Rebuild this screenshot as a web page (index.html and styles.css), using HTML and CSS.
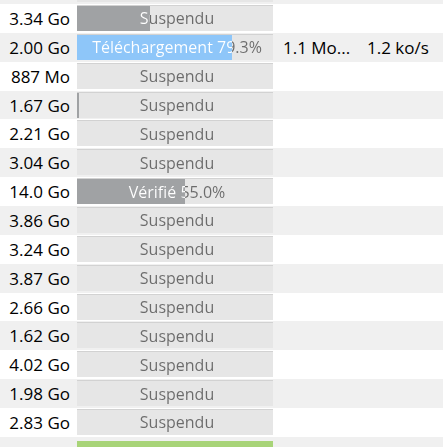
FILE: index.html
```html
<!DOCTYPE html>
<html lang="fr">

<head>
  <meta charset="UTF-8">
  <meta name="viewport" content="width=device-width, initial-scale=1.0">
  <title>Téléchargements</title>
  <link rel="stylesheet" href="styles.css">
</head>

<body>
  <div id="torrent-list">
    <div class="row">
      <div class="cell-size"></div>
      <div class="progress"></div>
    </div>
    <div class="row">
      <div class="cell-size">3.34 Go</div>
      <div class="progress paused" style="--done: 37%"><span class="label">Suspendu</span></div>
    </div>
    <div class="row">
      <div class="cell-size">2.00 Go</div>
      <div class="progress downloading" style="--done: 79.3%"><span class="label">Téléchargement 79.3%</span></div>
      <div class="cell-rate">1.1 Mo...</div>
      <div class="cell-rate">1.2 ko/s</div>
    </div>
    <div class="row">
      <div class="cell-size">887 Mo</div>
      <div class="progress"><span class="label">Suspendu</span></div>
    </div>
    <div class="row">
      <div class="cell-size">1.67 Go</div>
      <div class="progress paused" style="--done: 1.2%"><span class="label">Suspendu</span></div>
    </div>
    <div class="row">
      <div class="cell-size">2.21 Go</div>
      <div class="progress"><span class="label">Suspendu</span></div>
    </div>
    <div class="row">
      <div class="cell-size">3.04 Go</div>
      <div class="progress"><span class="label">Suspendu</span></div>
    </div>
    <div class="row">
      <div class="cell-size">14.0 Go</div>
      <div class="progress paused" style="--done: 55%"><span class="label">Vérifié 55.0%</span></div>
    </div>
    <div class="row">
      <div class="cell-size">3.86 Go</div>
      <div class="progress"><span class="label">Suspendu</span></div>
    </div>
    <div class="row">
      <div class="cell-size">3.24 Go</div>
      <div class="progress"><span class="label">Suspendu</span></div>
    </div>
    <div class="row">
      <div class="cell-size">3.87 Go</div>
      <div class="progress"><span class="label">Suspendu</span></div>
    </div>
    <div class="row">
      <div class="cell-size">2.66 Go</div>
      <div class="progress"><span class="label">Suspendu</span></div>
    </div>
    <div class="row">
      <div class="cell-size">1.62 Go</div>
      <div class="progress"><span class="label">Suspendu</span></div>
    </div>
    <div class="row">
      <div class="cell-size">4.02 Go</div>
      <div class="progress"><span class="label">Suspendu</span></div>
    </div>
    <div class="row">
      <div class="cell-size">1.98 Go</div>
      <div class="progress"><span class="label">Suspendu</span></div>
    </div>
    <div class="row">
      <div class="cell-size">2.83 Go</div>
      <div class="progress"><span class="label">Suspendu</span></div>
    </div>
    <div class="row">
      <div class="cell-size"></div>
      <div class="progress seeding" style="--done: 100%"></div>
    </div>
  </div>
</body>

</html>
```

FILE: styles.css
```css
body {
  margin: 0;
  background-color: white;
  font-family: "Open Sans", "Noto Sans", sans-serif;
  font-size: 17px;
  color: #000;
  overflow: hidden;
}

/* first row is scrolled almost out of view */
#torrent-list {
  margin-top: -24.86px;
}

.row {
  display: flex;
  align-items: center;
  height: 28.86px;
  white-space: nowrap;
}

.row:nth-child(odd) {
  background-color: #f0f0f0;
}

.cell-size {
  width: 70px;
  padding-right: 7px;
  text-align: right;
}

.cell-rate {
  padding-left: 10px;
  width: 74px;
}

/* --done is the finished part, the label turns white over it */
.progress {
  --done: 0%;
  --bar: #a0a2a4;
  position: relative;
  width: 196px;
  height: 25px;
  margin-top: -1px;
  background-color: #e6e6e6;
  border-top: 1px solid #d2d2d2;
  display: flex;
  align-items: center;
  font-size: 16px;

  &::before {
    content: "";
    position: absolute;
    top: 0;
    left: 0;
    bottom: 0;
    width: var(--done);
    background-color: var(--bar);
  }

  .label {
    position: relative;
    width: 100%;
    padding-left: 4px;
    box-sizing: border-box;
    text-align: center;
    background: linear-gradient(to right, #fff var(--done), #6b6b6b var(--done));
    -webkit-background-clip: text;
    background-clip: text;
    color: transparent;
  }
}

.paused {
  --bar: #a0a2a4;
}

.downloading {
  --bar: #8ec6f9;
}

.seeding {
  --bar: #a8d478;
  margin-top: 5px;
  border-top: none;
}
```
